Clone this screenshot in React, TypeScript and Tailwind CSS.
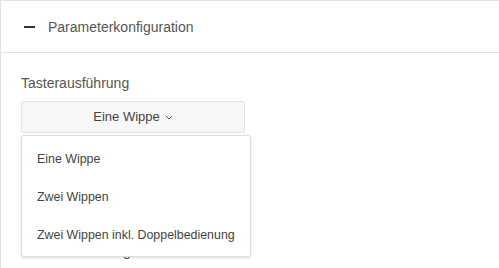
import React from "react";

export default function App() {
  const items = ["Eine Wippe", "Zwei Wippen", "Zwei Wippen inkl. Doppelbedienung"];
  return (
    <div className="w-[499px] h-[268px] overflow-hidden bg-white" style={{ fontFamily: '"Liberation Sans", Arial, sans-serif' }}>
      <div className="border-l border-t border-[#e2e2e2] w-[520px] h-[300px]">
        <div className="h-[52px] flex items-center pl-[23px] border-b border-[#e2e2e2]">
          <span className="block w-[11px] h-[2px] bg-[#333]" />
          <span className="ml-[13px] text-[14px] text-[#555] leading-none">Parameterkonfiguration</span>
        </div>
        <div className="pl-[20px] pt-[20px]">
          <div className="text-[14px] leading-[20px] text-[#555]">Tasterausführung</div>
          <div className="relative mt-[8px]">
            <button className="w-[224px] h-[32px] bg-[#f7f7f7] border border-[#e2e2e2] rounded-[3px] flex items-center justify-center text-[13px] text-[#444]">
              <span>Eine Wippe</span>
              <svg className="ml-[5px] mt-[1px]" width="8" height="5" viewBox="0 0 8 5" fill="none">
                <path d="M0.8 0.8 L4 4 L7.2 0.8" stroke="#555" strokeWidth="1" />
              </svg>
            </button>
            <div className="mt-[108px] text-[14px] leading-[20px] text-[#555]">LED-Beleuchtung</div>
            <div className="absolute left-0 top-[34px] w-[230px] h-[122px] bg-white border border-[#dedede] rounded-[3px] shadow-[0_1px_3px_rgba(0,0,0,0.12)] py-[4px]">
              {items.map((t) => (
                <div key={t} className="h-[38px] flex items-center pl-[15px] text-[12.4px] text-[#444]">
                  {t}
                </div>
              ))}
            </div>
          </div>
        </div>
      </div>
    </div>
  );
}
